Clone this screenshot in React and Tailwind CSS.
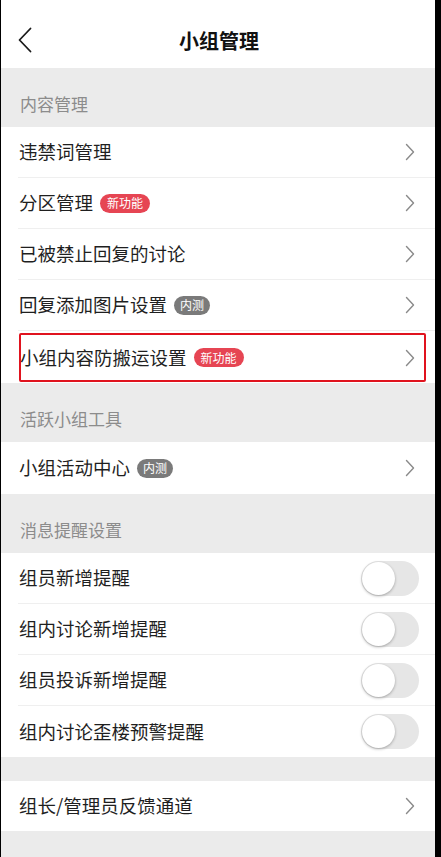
import React from "react";

const font = { fontFamily: '"Noto Sans CJK SC", "Noto Sans", sans-serif' };

function Chevron() {
  return (
    <svg width="10" height="18" viewBox="0 0 10 18" fill="none" className="shrink-0">
      <path d="M1.5 1.5 L8.5 9 L1.5 16.5" stroke="#8a8a8a" strokeWidth="1.4" strokeLinecap="round" strokeLinejoin="round" />
    </svg>
  );
}

function Badge({ kind }) {
  if (kind === "new")
    return (
      <span className="ml-[7px] inline-flex h-[19px] items-center rounded-full bg-[#e64553] px-[7px] text-[12px] leading-none text-white">
        新功能
      </span>
    );
  return (
    <span className="ml-[7px] inline-flex h-[19px] items-center rounded-full bg-[#7a7a7a] px-[6px] text-[12px] leading-none text-white">
      内测
    </span>
  );
}

function Toggle() {
  return (
    <div className="flex h-[35px] w-[58px] items-center rounded-full bg-[#e6e6e6] px-[1px]">
      <div className="h-[33px] w-[33px] rounded-full bg-white shadow-[0_1px_3px_rgba(0,0,0,0.3)]" />
    </div>
  );
}

function Row({ label, badge, toggle, last, boxed, h = "h-[51px]" }) {
  return (
    <div className="bg-white pl-[17px]">
      <div
        className={
          "flex items-center " +
          h +
          " " +
          (toggle ? "pr-[16px] " : "pr-[20px] ") +
          (last ? "" : "border-b border-[#efefef]")
        }
      >
        {boxed ? (
          <div className="ml-[1px] -mr-[11px] mt-[2px] mb-[1px] flex flex-1 items-center self-stretch rounded-[2px] border-2 border-[#e0131e] pr-[9px]">
            <span className="-ml-[1px] text-[18.5px] text-[#1f1f1f]">{label}</span>
            {badge && <Badge kind={badge} />}
            <div className="flex-1" />
            <Chevron />
          </div>
        ) : (
          <div className="flex flex-1 items-center">
            <span className="ml-[1px] text-[18.5px] text-[#1f1f1f]">{label}</span>
            {badge && <Badge kind={badge} />}
            <div className="flex-1" />
            {toggle ? <Toggle /> : <Chevron />}
          </div>
        )}
      </div>
    </div>
  );
}

function Section({ title }) {
  return (
    <div className="flex h-[59px] items-center bg-[#ebebeb] pl-[19px] pt-[12px] text-[17px] text-[#8c8c8c]">
      {title}
    </div>
  );
}

export default function App() {
  return (
    <div className="flex min-h-[857px] w-[441px] bg-black" style={font}>
      <div className="ml-[1px] flex w-[434px] flex-col bg-[#ebebeb]">
        <div className="relative flex h-[68px] items-center justify-center bg-white pt-[13px]">
          <svg width="14" height="26" viewBox="0 0 14 26" fill="none" className="absolute left-[17px] top-[27px]">
            <path d="M12.5 1.5 L1.5 13 L12.5 24.5" stroke="#1a1a1a" strokeWidth="1.8" strokeLinecap="round" strokeLinejoin="round" />
          </svg>
          <span className="ml-[2px] text-[20px] font-bold text-[#111]">小组管理</span>
        </div>
        <Section title="内容管理" />
        <Row label="违禁词管理" />
        <Row label="分区管理" badge="new" />
        <Row label="已被禁止回复的讨论" />
        <Row label="回复添加图片设置" badge="beta" />
        <Row label="小组内容防搬运设置" badge="new" last boxed h="h-[52px]" />
        <Section title="活跃小组工具" />
        <Row label="小组活动中心" badge="beta" last h="h-[52px]" />
        <Section title="消息提醒设置" />
        <Row label="组员新增提醒" toggle />
        <Row label="组内讨论新增提醒" toggle />
        <Row label="组员投诉新增提醒" toggle />
        <Row label="组内讨论歪楼预警提醒" toggle last />
        <div className="h-[24px] bg-[#ebebeb]" />
        <Row label="组长/管理员反馈通道" last h="h-[50px]" />
        <div className="flex-1 bg-[#ebebeb]" />
      </div>
    </div>
  );
}
